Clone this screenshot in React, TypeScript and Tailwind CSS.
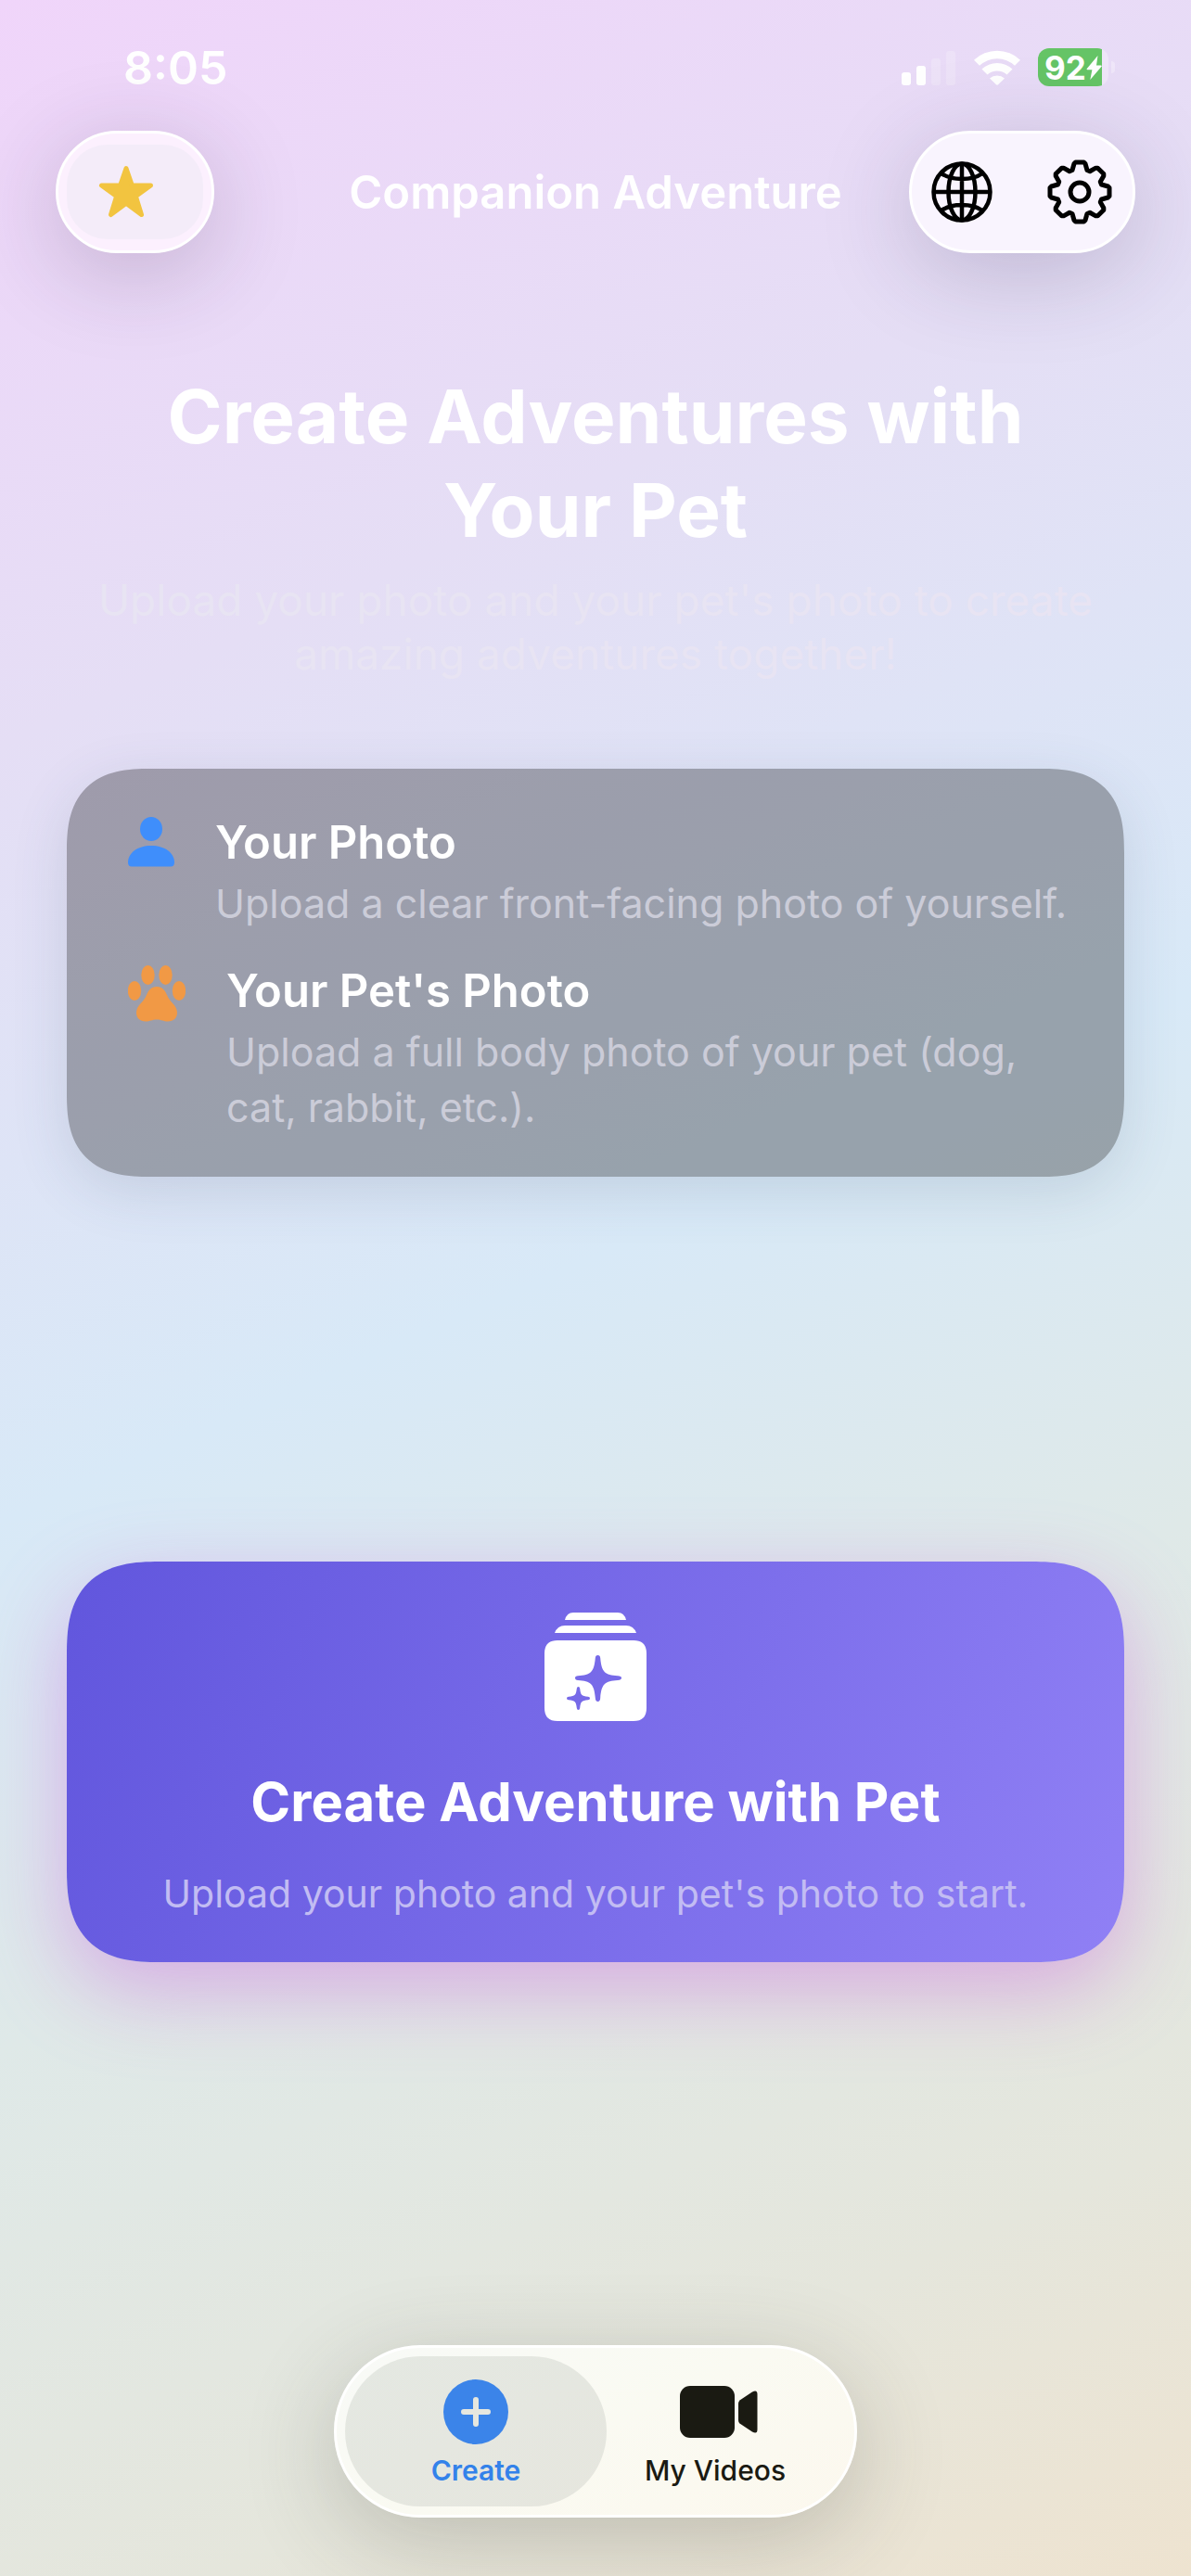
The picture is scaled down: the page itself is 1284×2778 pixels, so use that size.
import React from "react";

const GEAR_ANGLES = [0, 45, 90, 135, 180, 225, 270, 315];

// one tooth of the gear, drawn at 12 o'clock and turned around the centre
const gearPath = () => {
  const tooth = [
    [-8, -23.5],
    [-6, -30.5],
    [-4.5, -32],
    [4.5, -32],
    [6, -30.5],
    [8, -23.5],
  ];
  const points = GEAR_ANGLES.flatMap((deg) => {
    const a = (deg * Math.PI) / 180;
    return tooth.map(
      ([x, y]) =>
        `${(x * Math.cos(a) - y * Math.sin(a)).toFixed(2)} ${(
          x * Math.sin(a) +
          y * Math.cos(a)
        ).toFixed(2)}`
    );
  });
  return `M${points.join("L")}Z`;
};

function StatusBar() {
  return (
    <div className="flex items-center justify-between h-[141px] pl-[133px] pr-[82px] pt-1">
      <span className="text-[50px] leading-[60px] font-semibold">8:05</span>
      <div className="flex items-center gap-[18px]">
        <svg className="w-[60px] h-[38px]" viewBox="0 0 60 38" fill="white">
          <rect x="1" y="24" width="10" height="14" rx="3" />
          <rect x="17" y="17" width="10" height="21" rx="3" />
          <rect x="33" y="9" width="10" height="29" rx="3" opacity="0.2" />
          <rect x="49" y="1" width="10" height="37" rx="3" opacity="0.2" />
        </svg>
        <svg className="w-[52px] h-[38px]" viewBox="0 0 52 38" fill="white">
          <path d="M1 10.800A36 36 0 0 1 51 10.800L45 16.800A27.500 27.500 0 0 0 7 16.800Z" />
          <path d="M9.500 20.500A24 24 0 0 1 42.500 20.500L36.500 26.500A15.500 15.500 0 0 0 15.500 26.500Z" />
          <path d="M18 30.500A12 12 0 0 1 34 30.500L27 37.300Q26 38.200 25 37.300Z" />
        </svg>
        <div className="flex items-center gap-[3px]">
          <div className="flex items-center h-[41px] w-[76px] rounded-[12px] overflow-hidden bg-white/30">
            <div className="flex items-center h-full w-[69px] pl-[7px] bg-[#65c466]">
              <span className="text-[35px] leading-[40px] font-bold">92</span>
              <svg className="w-[17px] h-[26px] shrink-0" viewBox="0 0 17 26">
                <path
                  d="M12.500 0 .8 14q-.8 1.200.6 1.200h5L4.300 26 16.500 11.800q.9-1.200-.6-1.200H11Z"
                  fill="white"
                />
              </svg>
            </div>
          </div>
          <div className="w-[4px] h-[13px] rounded-r-full bg-white/30" />
        </div>
      </div>
    </div>
  );
}

function Header() {
  return (
    <header className="grid grid-cols-[1fr_auto_1fr] items-center px-[60px]">
      <button
        aria-label="Favorites"
        className="justify-self-start flex items-center justify-center w-[171px] h-[132px] rounded-[66px] border-[3px] border-white bg-[#fcf0fe] shadow-[0_20px_100px_rgba(50,30,70,0.22)]"
      >
        <span className="flex items-center justify-center w-[147px] h-[102px] pr-[19px] rounded-[44px] bg-[#f4ecf9]">
          <svg className="w-[60px] h-[58px]" viewBox="0 0 60 58">
            <path
              d="M30 3.500 36.400 22H56.500L40.300 33.600 46.500 53.500 30 41.300 13.500 53.500 19.700 33.600 3.500 22H23.600Z"
              fill="#f2c440"
              stroke="#f2c440"
              strokeWidth="5"
              strokeLinejoin="round"
            />
          </svg>
        </span>
      </button>
      <span className="pt-[2px] text-[49px] leading-[60px] font-semibold">
        Companion Adventure
      </span>
      <div className="justify-self-end flex items-center justify-between w-[244px] h-[132px] pl-[20px] pr-[22px] rounded-[66px] border-[3px] border-white bg-[#f9f4fe] shadow-[0_20px_100px_rgba(50,40,80,0.22)]">
        <button aria-label="Language">
          <svg
            className="w-[68px] h-[68px]"
            viewBox="-34 -34 68 68"
            fill="none"
            stroke="black"
            strokeWidth="4.500"
          >
            <circle r="30.500" />
            <ellipse rx="14.500" ry="30.500" />
            <path d="M0-30V30M-30 0H30M-22-20C-11-12 11-12 22-20M-22 20C-11 12 11 12 22 20" />
          </svg>
        </button>
        <button aria-label="Settings">
          <svg
            className="w-[70px] h-[70px]"
            viewBox="-35 -35 70 70"
            fill="none"
            stroke="black"
            strokeWidth="5"
            strokeLinejoin="round"
          >
            <path d={gearPath()} />
            <circle r="10" />
          </svg>
        </button>
      </div>
    </header>
  );
}

function PhotoTips() {
  return (
    <section className="flex flex-col gap-[33px] pt-[48px] pb-[45px] pl-[66px] pr-[50px] rounded-[90px] [corner-shape:superellipse(1.4)] bg-black/30 shadow-[0_16px_60px_rgba(70,90,120,0.16)]">
      <div className="flex items-start gap-[44px]">
        <svg className="w-[50px] h-[54px] mt-[4px] shrink-0" viewBox="0 0 50 54" fill="#3f8efb">
          <ellipse cx="25" cy="13" rx="12" ry="13" />
          <path d="M0 49C0 39 10 31 25 31S50 39 50 49Q50 53.500 46 53.500H4Q0 53.500 0 49Z" />
        </svg>
        <div>
          <h2 className="text-[49px] leading-[63px] font-semibold">
            Your Photo
          </h2>
          <p className="text-[43px] leading-[60px] mt-[4px] text-[#cbccd8]">
            Upload a clear front-facing photo of yourself.
          </p>
        </div>
      </div>
      <div className="flex items-start gap-[44px]">
        <svg className="w-[62px] h-[61px] mt-[4px] shrink-0" viewBox="0 0 62 61" fill="#f19945">
          <ellipse cx="21.500" cy="10.500" rx="7.200" ry="10.500" />
          <ellipse cx="40.500" cy="10.500" rx="7.200" ry="10.500" />
          <ellipse cx="7" cy="27.500" rx="7.200" ry="10.500" />
          <ellipse cx="55" cy="27.500" rx="7.200" ry="10.500" />
          <path d="M31 23C37 23 40 27 42 32C45 40 53 43 53 51C53 57 49 60.500 43 60.500C38 60.500 36 58.500 31 58.500S24 60.500 19 60.500C13 60.500 9 57 9 51C9 43 17 40 20 32C22 27 25 23 31 23Z" />
        </svg>
        <div>
          <h2 className="text-[49px] leading-[63px] font-semibold">
            Your Pet's Photo
          </h2>
          <p className="text-[43px] leading-[60px] mt-[4px] text-[#cbccd8]">
            Upload a full body photo of your pet (dog, cat, rabbit, etc.).
          </p>
        </div>
      </div>
    </section>
  );
}

function CreateCard() {
  return (
    <button className="flex flex-col items-center w-full pt-[54px] pb-[44px] rounded-[100px] [corner-shape:superellipse(1.4)] bg-[linear-gradient(111deg,#6156dd_0%,#9080f5_100%)] shadow-[0_30px_90px_rgba(200,80,220,0.4)]">
      <svg className="w-[112px] h-[120px]" viewBox="0 0 112 120" fill="white">
        <path d="M23 9Q25 1 32 1H80Q87 1 89 9Z" />
        <path d="M12 23Q15 15 23 15H89Q97 15 100 23Z" />
        <path
          fillRule="evenodd"
          d="M15 31H97Q111 31 111 45V104Q111 118 97 118H15Q1 118 1 104V45Q1 31 15 31ZM58.500 47Q56 47 55.800 50C54.500 65 51 68.500 37 69.300Q34 69.500 34 71.500T37 74C51 75 54.500 78 55.800 93Q56 97 58.500 97T61.200 93C62.500 78 66 75 80 74Q84 73.500 84 71.500T80 69.300C66 68.500 62.500 65 61.200 50Q61 47 58.500 47ZM37.500 81Q36 81 35.800 83C35 90 34 91 27 91.700Q25 92 25 93.500T27 95.300C34 96 35 97 35.800 104Q36 106 37.500 106T39.200 104C40 97 41 96 48 95.300Q50 95 50 93.500T48 91.700C41 91 40 90 39.200 83Q39 81 37.500 81Z"
        />
      </svg>
      <span className="mt-[49px] text-[58px] leading-[72px] font-bold">
        Create Adventure with Pet
      </span>
      <span className="mt-[33px] text-[41px] leading-[60px] text-[#c2bcf3]">
        Upload your photo and your pet's photo to start.
      </span>
    </button>
  );
}

function TabBar() {
  return (
    <nav className="flex w-[564px] mx-auto p-[9px] rounded-[93px] border-[3px] border-white bg-[linear-gradient(155deg,#f8faf7_0%,#fafaf2_50%,#fcf8ee_100%)] shadow-[0_24px_100px_rgba(60,60,50,0.24)]">
      <button
        aria-current="page"
        className="flex flex-col items-center w-[282px] h-[162px] pt-[25px] rounded-[81px] bg-[linear-gradient(155deg,#e4e8e2_0%,#e6e6de_100%)] text-[#3382ea]"
      >
        <svg className="w-[70px] h-[70px]" viewBox="0 0 70 70">
          <circle cx="35" cy="35" r="35" fill="#3b84e9" />
          <path
            d="M35 22V48M22 35H48"
            stroke="#e6e7df"
            strokeWidth="6"
            strokeLinecap="round"
          />
        </svg>
        <span className="mt-[9px] text-[30px] leading-[38px] font-semibold">
          Create
        </span>
      </button>
      <button className="flex flex-col items-center w-[282px] -ml-6 h-[162px] pt-[25px] rounded-[81px] text-[#1a1a12]">
        <svg className="w-[94px] h-[70px]" viewBox="-8 0 94 70" fill="#1a1a12">
          <rect x="1" y="7" width="59" height="56" rx="11" />
          <path d="M64 26Q64 24 65.500 22.500L79 13.500Q84.500 10.500 84.500 16V54Q84.500 59.500 79 56.500L65.500 47.500Q64 46 64 44Z" />
        </svg>
        <span className="mt-[9px] text-[30px] leading-[38px] font-medium">
          My Videos
        </span>
      </button>
    </nav>
  );
}

export default function App() {
  return (
    <div className="flex flex-col min-h-screen overflow-hidden font-['Inter',sans-serif] text-white bg-[linear-gradient(156deg,#f0d5fa_0%,#e5def5_24%,#d8e9f7_49%,#dfe9e8_66%,#e5e6dc_86%,#eee3d0_100%)]">
      <StatusBar />
      <Header />
      <main className="flex flex-col px-[72px]">
        <div className="pt-[125px] text-center">
          <h1 className="px-[90px] text-[80px] leading-[101px] font-bold">
            Create Adventures with Your Pet
          </h1>
          <p className="mt-[18px] text-[46px] leading-[58px] text-[#e8e4f3]">
            Upload your photo and your pet's photo to create amazing adventures
            together!
          </p>
        </div>
        <div className="mt-[95px]">
          <PhotoTips />
        </div>
        <div className="mt-[415px]">
          <CreateCard />
        </div>
      </main>
      <div className="mt-auto pb-[63px]">
        <TabBar />
      </div>
    </div>
  );
}
